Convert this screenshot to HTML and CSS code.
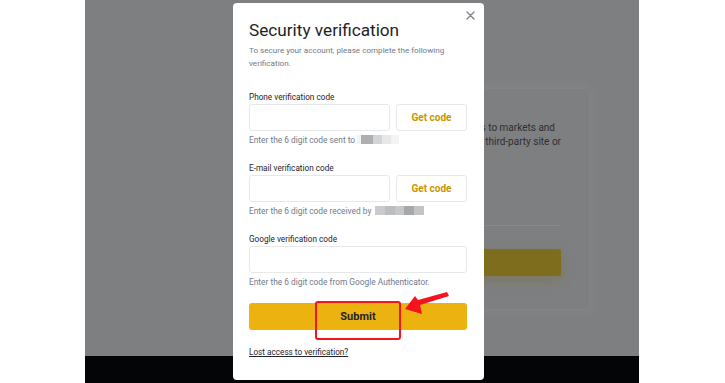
FILE: index.html
```html
<!DOCTYPE html>
<html lang="en">
<head>
<meta charset="utf-8">
<title>Security verification</title>
<link rel="stylesheet" href="styles.css">
</head>
<body>
<div class="frame">
  <div class="page">
    <div class="card">
      <div class="card-text">
        <div class="line l1">Binance gives access to markets and</div>
        <div class="line">never share it on any third-party site or</div>
      </div>
      <div class="card-divider"></div>
      <div class="card-btn"></div>
    </div>
  </div>
  <div class="footer"></div>

  <div class="modal">
    <button class="close" aria-label="Close">
      <svg width="9" height="9" viewBox="0 0 9 9"><path d="M1 1L8 8M8 1L1 8" stroke="#7d838c" stroke-width="1.4" stroke-linecap="round"/></svg>
    </button>
    <h1 class="title">Security verification</h1>
    <p class="subtitle">To secure your account, please complete the following verification.</p>

    <div class="field first">
      <div class="label">Phone verification code</div>
      <div class="row">
        <div class="input short"></div>
        <div class="getcode">Get code</div>
      </div>
      <div class="hint">Enter the 6 digit code sent to <span class="mask mask-phone"><i class="m1"></i><i class="m2"></i><i class="m3"></i><i class="m4"></i><i class="m5"></i></span></div>
    </div>

    <div class="field">
      <div class="label">E-mail verification code</div>
      <div class="row">
        <div class="input short"></div>
        <div class="getcode">Get code</div>
      </div>
      <div class="hint">Enter the 6 digit code received by <span class="mask mask-mail"><i class="e1"></i><i class="e2"></i><i class="e3"></i><i class="e4"></i><i class="e5"></i></span></div>
    </div>

    <div class="field">
      <div class="label">Google verification code</div>
      <div class="row">
        <div class="input full"></div>
      </div>
      <div class="hint">Enter the 6 digit code from Google Authenticator.</div>
    </div>

    <button class="submit">Submit</button>
    <a class="lost" href="#">Lost access to verification?</a>

    <div class="highlight"></div>
    <svg class="arrow" width="50" height="30" viewBox="0 0 50 30">
      <polygon points="2,18 12,5 15,9 44,1 46,5 17,14 19,23" fill="#f5141e"/>
    </svg>
  </div>
</div>
</body>
</html>
```

FILE: styles.css
```css
* { box-sizing: border-box; }

body {
  margin: 0;
  background: #ffffff;
  font-family: Roboto, "Liberation Sans", Arial, sans-serif;
}

.frame {
  position: relative;
  width: 554px;
  height: 383px;
  margin-left: 85px;
  background: #7e7f81;
  display: flex;
  flex-direction: column;
  overflow: hidden;
}

.page {
  flex: 1;
  padding-top: 88px;
  padding-left: 215px;
}

.card {
  width: 290px;
  height: 222px;
  border: 1px solid #838486;
  border-radius: 4px;
  box-shadow: 0 0 10px 3px rgba(255, 255, 255, 0.04);
  padding: 32px 28px 0 0;
}

.card-text {
  font-size: 10px;
  line-height: 14px;
  color: #2e2f31;
}

.card-text .line {
  white-space: nowrap;
  text-align: right;
  overflow: hidden;
}

.card-text .l1 { padding-right: 6px; }

.card-divider {
  margin-top: 76px;
  height: 1px;
  background: #88898b;
}

.card-btn {
  margin-top: 23px;
  height: 27px;
  background: #7e6d1c;
  border-radius: 2px;
  box-shadow: 0 4px 12px rgba(126, 109, 28, 0.35);
}

.footer {
  height: 27px;
  background: #030507;
}

.modal {
  position: absolute;
  left: 148px;
  top: 3px;
  width: 251px;
  height: 377px;
  background: #ffffff;
  border-radius: 4px;
  padding: 15px 17px 0 16px;
  color: #1e2329;
}

.close {
  position: absolute;
  top: 8px;
  right: 9px;
  width: 9px;
  height: 9px;
  padding: 0;
  border: 0;
  background: none;
  display: flex;
}

.title {
  margin: 0;
  font-size: 17.2px;
  line-height: 24px;
  font-weight: 400;
  color: #1e2329;
}

.subtitle {
  margin: 2px 0 0;
  font-size: 8.1px;
  line-height: 13px;
  color: #707a8a;
}

.field {
  margin-top: 16px;
}

.field.first {
  margin-top: 21px;
}

.label {
  font-size: 8.2px;
  line-height: 12px;
  color: #1e2329;
}

.row {
  display: flex;
  gap: 6px;
  margin-top: 1px;
}

.input {
  height: 27px;
  border: 1px solid #e6e8ea;
  border-radius: 3px;
}

.input.short { width: 141px; }
.input.full { flex: 1; }

.getcode {
  flex: 1;
  height: 27px;
  border: 1px solid #e6e8ea;
  border-radius: 3px;
  display: flex;
  align-items: center;
  justify-content: center;
  font-size: 10px;
  font-weight: 700;
  color: #c99400;
}

.hint {
  margin-top: 3px;
  font-size: 8.35px;
  line-height: 12px;
  color: #707a8a;
  white-space: nowrap;
}

.mask {
  display: inline-flex;
  vertical-align: -1px;
  height: 9px;
}

.mask i { display: block; height: 9px; }
.m1 { width: 4px; background: #f2f2f3; }
.m2 { width: 12px; background: #aeafb1; }
.m3 { width: 9px; background: #d3d4d6; }
.m4 { width: 9px; background: #e7e8ea; }
.m5 { width: 8px; background: #f3f3f4; }
.mask-mail { margin-left: 2px; }
.e1 { width: 10px; background: #c9cacc; }
.e2 { width: 10px; background: #bcbdbf; }
.e3 { width: 9px; background: #c6c7c9; }
.e4 { width: 10px; background: #a7a8aa; }
.e5 { width: 10px; background: #c3c4c6; }

.submit {
  display: block;
  width: 100%;
  height: 27px;
  margin-top: 15px;
  border: 0;
  border-radius: 3px;
  background: #ecb20f;
  font-family: inherit;
  font-size: 11px;
  font-weight: 700;
  color: #1e2329;
  padding: 0;
}

.lost {
  display: block;
  margin-top: 16px;
  font-size: 8.2px;
  line-height: 12px;
  color: #1e2329;
  text-decoration: underline;
}

.highlight {
  position: absolute;
  left: 82px;
  top: 298px;
  width: 86px;
  height: 39px;
  border: 2px solid #f5141e;
  border-radius: 3px;
}

.arrow {
  position: absolute;
  left: 170px;
  top: 288px;
}
```
